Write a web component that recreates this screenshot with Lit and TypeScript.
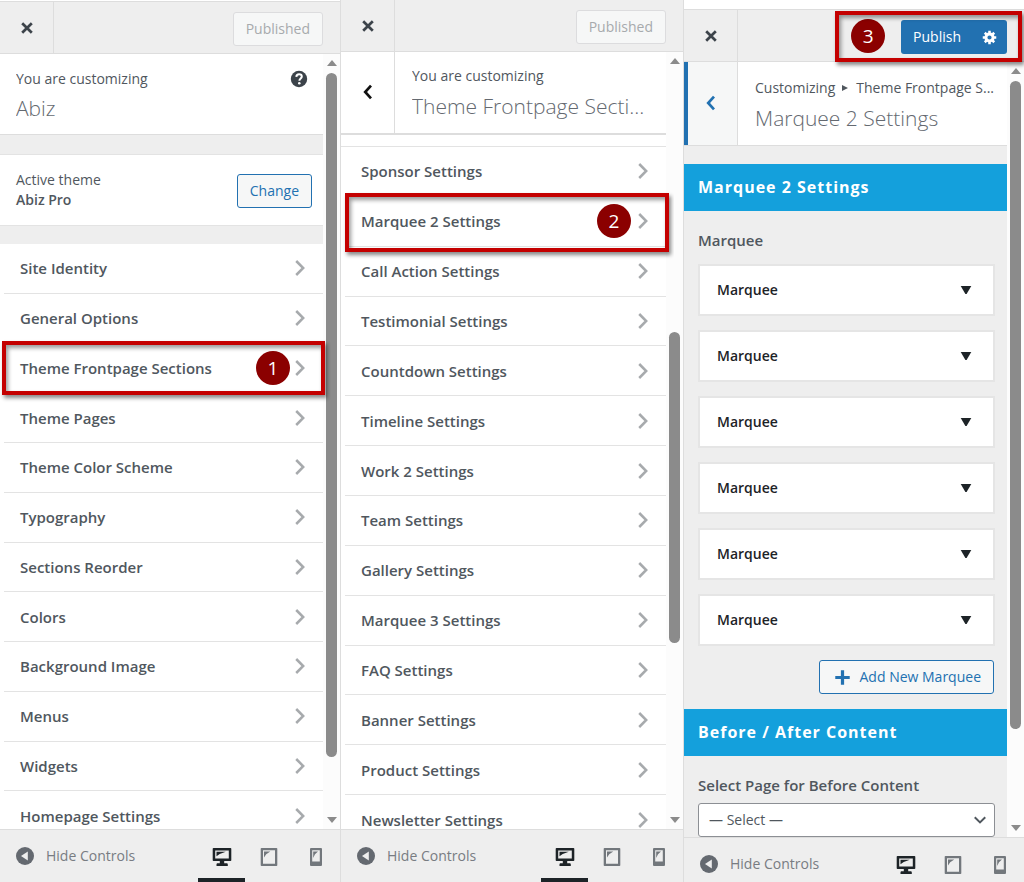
import { LitElement, html, css, svg, nothing, TemplateResult } from "lit";
import { customElement, property } from "lit/decorators.js";
import { classMap } from "lit/directives/class-map.js";
import { styleMap } from "lit/directives/style-map.js";

const glyphs = {
  close: svg`<path d="M5.2 5.2 14.8 14.8M14.8 5.2 5.2 14.8" fill="none" stroke="currentColor" stroke-width="2.7"/>`,
  back: svg`<path d="M13 3.6 7.2 10 13 16.400" fill="none" stroke="currentColor" stroke-width="2.7"/>`,
  next: svg`<path d="M6.200 3 13.200 10 6.200 17" fill="none" stroke="currentColor" stroke-width="2.5"/>`,
  down: svg`<path d="M2.700 4h10.600L8.600 12h-1.200z" fill="currentColor"/>`,
  plus: svg`<path d="M10 1.500v17M1.500 10h17" fill="none" stroke="currentColor" stroke-width="3.800"/>`,
  help: svg`<circle cx="10" cy="10" r="8.200" fill="currentColor"/><path d="M7.300 7.900c.1-1.900 1.300-2.700 2.800-2.700 1.600 0 2.700.9 2.700 2.300 0 2-2.400 2-2.400 4.200" fill="none" stroke="#fff" stroke-width="2"/><circle cx="10.300" cy="14.300" r="1.300" fill="#fff"/>`,
  collapse: svg`<circle cx="10" cy="10" r="9" fill="currentColor"/><path d="M12.800 5.600v8.800L6 10z" fill="#eee"/>`,
  desktop: svg`<path fill-rule="evenodd" d="M1.500 1h17a.8.8 0 0 1 .8.8v11.400a.8.8 0 0 1-.8.8h-6.300v2.200h2.300c.8 0 1.300.5 1.300 1.300V19H4.500v-1.500c0-.8.5-1.300 1.300-1.300h2V14H1.500a.8.8 0 0 1-.8-.8V1.800a.8.8 0 0 1 .8-.8zM3.200 3.500v8h13.600v-8z" fill="currentColor"/><path d="M4.500 4.700h9.300L7.700 7 4.500 9.300z" fill="currentColor"/>`,
  tablet: svg`<path fill-rule="evenodd" d="M2.500 1h15a.8.8 0 0 1 .8.8v16.400a.8.8 0 0 1-.8.8h-15a.8.8 0 0 1-.8-.8V1.800a.8.8 0 0 1 .8-.8zM4 3.300v13.400h12V3.300z" fill="currentColor"/><path d="M5 4.500h6.300L7.200 7.200 5 10.500z" fill="currentColor"/>`,
  phone: svg`<path fill-rule="evenodd" d="M5 1h10a1 1 0 0 1 1 1v16a1 1 0 0 1-1 1H5a1 1 0 0 1-1-1V2a1 1 0 0 1 1-1zM6.200 3.300v11.200h7.600V3.300z" fill="currentColor"/><path d="M7.200 4.500h4.800l-3 2.800L7.200 11z" fill="currentColor"/>`,
  gear: svg`<g fill="none" stroke="currentColor"><circle cx="10" cy="10" r="4.800" stroke-width="4"/><path d="M10 1v4M10 15v4M1 10h4M15 10h4M3.700 3.700l2.800 2.800M13.500 13.500l2.800 2.800M16.300 3.700l-2.800 2.800M6.500 13.500l-2.800 2.800" stroke-width="3.400"/></g>`,
  select: svg`<path d="M2.500 6 10 13.500 17.500 6" fill="none" stroke="currentColor" stroke-width="2.800"/>`,
};

const icon = (name: keyof typeof glyphs, size = 20) =>
  html`<svg class="icon" width=${size} height=${size} viewBox=${name === "down" ? "0 0 16 16" : "0 0 20 20"} aria-hidden="true">${glyphs[name]}</svg>`;

const base = css`
  *, *::before, *::after { box-sizing: border-box; }
  button, select { font: inherit; color: inherit; margin: 0; padding: 0; border: 0; background: none; }
  h2, h3, p, ul { margin: 0; padding: 0; font: inherit; list-style: none; }
  .icon { display: block; flex: none; }
`;

@customElement("step-badge")
class StepBadge extends LitElement {
  static styles = css`
    :host { display: grid; place-items: center; flex: none; width: 34px; height: 34px; border-radius: 50%;
      background: #8b0000; color: #fff; font-size: 19px; line-height: 20px; font-weight: 400; }
  `;
  render() { return html`<slot></slot>`; }
}

@customElement("scroll-track")
class ScrollTrack extends LitElement {
  @property({ type: Number }) before = 0;
  @property({ type: Number }) thumb = 0;
  @property({ type: Number }) after = 0;
  static styles = css`
    :host { display: flex; flex-direction: column; align-items: center; flex: none; width: 17px;
      padding: 6px 0; background: #fcfcfc; }
    .arrow { display: block; flex: none; color: #8b8b8b; }
    .lane { flex: 1; display: flex; flex-direction: column; padding: 7px 0 6px; }
    .thumb { width: 11px; border-radius: 6px; background: #8b8b8b; }
  `;
  render() {
    return html`
      <svg class="arrow" width="10" height="6" viewBox="0 0 10 6"><path d="M5 0 10 6H0z" fill="currentColor"/></svg>
      <div class="lane">
        <div style=${styleMap({ flexGrow: String(this.before) })}></div>
        <div class="thumb" style=${styleMap({ flexGrow: String(this.thumb) })}></div>
        <div style=${styleMap({ flexGrow: String(this.after) })}></div>
      </div>
      <svg class="arrow" width="10" height="6" viewBox="0 0 10 6"><path d="M0 0H10L5 6z" fill="currentColor"/></svg>`;
  }
}

@customElement("panel-footer")
class PanelFooter extends LitElement {
  static styles = [base, css`
    :host { display: block; flex: none; border-top: 1px solid #ddd; background: #eee; color: #646970; overflow: hidden; }
    .bar { display: flex; height: 52px; padding-right: 1px; }
    .hide { display: flex; align-items: center; gap: 11px; padding-left: 15px; font-size: 14px; line-height: 20px; color: #787c82; }
    .hide .icon { color: #646970; }
    .devices { display: flex; margin-left: auto; }
    .device { display: grid; place-items: center; width: 47px; border-bottom: 4px solid transparent; padding-top: 5px; color: #72777c; }
    .device.on { color: #1d2327; border-color: #1d2327; }
  `];
  render() {
    return html`<div class="bar">
      <button class="hide">${icon("collapse")}<span>Hide Controls</span></button>
      <div class="devices">
        <button class="device on" aria-label="Desktop preview">${icon("desktop")}</button>
        <button class="device" aria-label="Tablet preview">${icon("tablet")}</button>
        <button class="device" aria-label="Mobile preview">${icon("phone")}</button>
      </div>
    </div>`;
  }
}

@customElement("app-root")
class AppRoot extends LitElement {
  static styles = [base, css`
    :host { display: block; font-family: "Segoe UI", "Open Sans", "Noto Sans", sans-serif; font-size: 14px; line-height: 20px;
      color: #50575e; background: #fff; }
    .page { display: grid; grid-template-columns: 340fr 343fr 341fr; height: 100vh; overflow: hidden; }
    .panel { display: flex; flex-direction: column; min-width: 0; min-height: 0; border-left: 1px solid #ddd; }
    .panel.first { border-left: 0; padding-top: 1px; }
    .panel.last { padding-top: 9px; }
    .panel.last panel-footer { height: 45px; }

    .head { display: flex; align-items: center; flex: none; height: 53px; border: solid #ddd; border-width: 1px 0; background: #eee; padding-right: 17px; }
    .middle .head { height: 52px; border-top: 0; }
    .close { display: grid; place-items: center; align-self: stretch; width: 54px; border-right: 1px solid #ddd; color: #3c434a; }
    .actions { margin-left: auto; display: flex; align-items: center; position: relative; }
    .published, .publish, .gear { height: 34px; margin-top: 3px; }
    .published { padding: 0 12px; border: 1px solid #dcdcde; border-radius: 3px; background: #f6f7f7; color: #a7aaad; }
    .publish, .gear { background: #2271b1; color: #fff; }
    .publish { padding: 0 12px; border-radius: 3px 0 0 3px; }
    .gear { display: grid; place-items: center; width: 34px; padding-right: 2px; border-radius: 0 3px 3px 0; }
    .actions step-badge { margin-right: 16px; }

    .body { display: flex; flex: 1; min-height: 0; }
    .content { display: flex; flex-direction: column; flex: 1; min-width: 0; min-height: 0; clip-path: inset(0 -8px 0 0); background: #eee; }
    .middle .content { background: #fff; }

    .info { display: flex; flex: none; background: #fff; border-bottom: 1px solid #ddd; }
    .middle .info { border-bottom-width: 2px; }
    .back { display: grid; place-items: center; width: 54px; padding-bottom: 2px; border-right: 1px solid #ddd; color: #111; }
    .last .back { border-left: 4px solid #2271b1; padding-right: 4px; background: #f6f7f7; color: #2271b1; }
    .heading { flex: 1; min-width: 0; padding: 14px 12px 12px 17px; }
    .crumb, .title { white-space: nowrap; overflow: hidden; }
    .title { font-size: 21px; line-height: 30px; font-weight: 300; padding-top: 5px; color: #646970; }
    .first .heading { padding: 15px 12px 12px 16px; }
    .first .title { padding-top: 4px; margin-bottom: -1px; }
    .last .heading { padding-top: 16px; padding-right: 8px; }
    .tiny { display: inline-block; margin: 0 8px 2px 7px; }
    .help { align-self: flex-start; margin: 15px 14px 0 0; color: #3c434a; }

    .theme { display: flex; align-items: center; justify-content: space-between; flex: none; height: 72px; margin: 19px 0 18px;
      padding: 0 11px 0 16px; background: #fff; border: solid #e3e3e3; border-width: 1px 0; }
    .name { font-weight: 600; }
    .outline { display: flex; align-items: center; gap: 8px; height: 34px; padding: 0 12px; border: 1px solid #2271b1; border-radius: 3px; background: #f6f7f7; color: #2271b1; }
    .theme .outline { margin-top: 2px; }

    .list { display: grid; grid-auto-rows: 1fr; flex: 1; background: #fff; margin-bottom: -12px; padding-left: 4px; }
    .middle .list { margin: 11px 0 -16px; border-top: 1px solid #e3e3e3; }
    .row { position: relative; display: flex; }
    .item { display: flex; align-items: center; flex: 1; min-width: 0; padding: 0 13px 0 16px; border-bottom: 1px solid #e3e3e3; font-size: 15px; font-weight: 600; text-align: left; }
    .item span { flex: 1; }
    .item .icon { color: #a7aaad; }
    .mark { position: absolute; inset: -3px -2px -2px; border: 4px solid #c40000; box-shadow: 2px 3px 4px #0007, inset 2px 3px 4px #0006; pointer-events: none; z-index: 1; }
    .middle .mark { inset: -4px -3px -5px 0; }
    .actions .mark { inset: -6px -15px -8px -16px; }
    .middle .item step-badge { margin-right: 2px; }

    .band { flex: none; height: 47px; padding: 0 14px; background: #14a0dc; color: #fff; font-size: 16px; line-height: 47px; font-weight: 700; letter-spacing: 1px; }
    .info + .band { margin-top: 18px; }
    .group { flex: none; display: flex; flex-direction: column; padding: 19px 12px 15px 14px; }
    .label { font-size: 15px; line-height: 20px; font-weight: 600; }
    .cards { display: grid; gap: 14px; padding: 14px 0; }
    .card { display: flex; align-items: center; justify-content: space-between; width: 100%; height: 52px; padding: 0 19px 0 17px; border: 2px solid #e5e5e5; background: #fff; color: #1d2327; font-weight: 600; }
    .add { align-self: flex-end; margin-right: 1px; gap: 9px; padding: 0 12px 0 14px; }
    .pick { position: relative; margin-top: 8px; color: #50575e; }
    .select { appearance: none; display: block; width: 100%; height: 34px; padding: 0 28px 0 10px; border: 1px solid #8c8f94; border-radius: 3px; background: #fff; }
    .pick .icon { position: absolute; right: 8px; top: 10px; pointer-events: none; }
  `];

  private head(actions: TemplateResult) {
    return html`<header class="head">
      <button class="close" aria-label="Close">${icon("close")}</button>
      <div class="actions">${actions}</div>
    </header>`;
  }

  private list(names: string[], marked: string, step: number) {
    return html`<ul class="list">${names.map((n) => html`
      <li class="row">
        <button class="item"><span>${n}</span>${n === marked ? html`<step-badge>${step}</step-badge>` : nothing}${icon("next")}</button>
        ${n === marked ? html`<div class="mark"></div>` : nothing}
      </li>`)}</ul>`;
  }

  private panel(kind: string, head: TemplateResult, content: TemplateResult, scroll: number[]) {
    return html`<section class=${classMap({ panel: true, [kind]: true })}>
      ${this.head(head)}
      <div class="body">
        <div class="content">${content}</div>
        <scroll-track .before=${scroll[0]} .thumb=${scroll[1]} .after=${scroll[2]}></scroll-track>
      </div>
      <panel-footer></panel-footer>
    </section>`;
  }

  render() {
    const published = html`<button class="published" disabled>Published</button>`;
    return html`<main class="page">
      ${this.panel("first", published, html`
        <div class="info">
          <div class="heading"><p class="crumb">You are customizing</p><h2 class="title">Abiz</h2></div>
          <button class="help" aria-label="Help">${icon("help")}</button>
        </div>
        <div class="theme">
          <div><p>Active theme</p><h3 class="name">Abiz Pro</h3></div>
          <button class="outline">Change</button>
        </div>
        ${this.list(["Site Identity", "General Options", "Theme Frontpage Sections", "Theme Pages", "Theme Color Scheme", "Typography",
          "Sections Reorder", "Colors", "Background Image", "Menus", "Widgets", "Homepage Settings"], "Theme Frontpage Sections", 1)}
      `, [0, 683, 54])}
      ${this.panel("middle", published, html`
        <div class="info">
          <button class="back" aria-label="Back">${icon("back")}</button>
          <div class="heading"><p class="crumb">You are customizing</p><h2 class="title">Theme Frontpage Secti...</h2></div>
        </div>
        ${this.list(["Sponsor Settings", "Marquee 2 Settings", "Call Action Settings", "Testimonial Settings", "Countdown Settings",
          "Timeline Settings", "Work 2 Settings", "Team Settings", "Gallery Settings", "Marquee 3 Settings", "FAQ Settings",
          "Banner Settings", "Product Settings", "Newsletter Settings"], "Marquee 2 Settings", 2)}
      `, [261, 312, 168])}
      ${this.panel("last", html`
        <step-badge>3</step-badge>
        <button class="publish">Publish</button><button class="gear" aria-label="Publish settings">${icon("gear", 15)}</button>
        <div class="mark"></div>
      `, html`
        <div class="info">
          <button class="back" aria-label="Back">${icon("back")}</button>
          <div class="heading">
            <p class="crumb">Customizing<svg class="tiny" width="6" height="6" viewBox="0 0 6 6"><path d="M0 0 6 3 0 6z" fill="currentColor"/></svg>Theme Frontpage S...</p>
            <h2 class="title">Marquee 2 Settings</h2>
          </div>
        </div>
        <h3 class="band">Marquee 2 Settings</h3>
        <div class="group">
          <p class="label">Marquee</p>
          <div class="cards">${Array.from({ length: 6 }, () => html`<button class="card">Marquee${icon("down", 16)}</button>`)}</div>
          <button class="outline add">${icon("plus", 17)}Add New Marquee</button>
        </div>
        <h3 class="band">Before / After Content</h3>
        <div class="group">
          <label class="label" for="before-page">Select Page for Before Content</label>
          <div class="pick">
            <select class="select" id="before-page"><option>— Select —</option></select>
            ${icon("select", 14)}
          </div>
        </div>
      `, [0, 645, 90])}
    </main>`;
  }
}
